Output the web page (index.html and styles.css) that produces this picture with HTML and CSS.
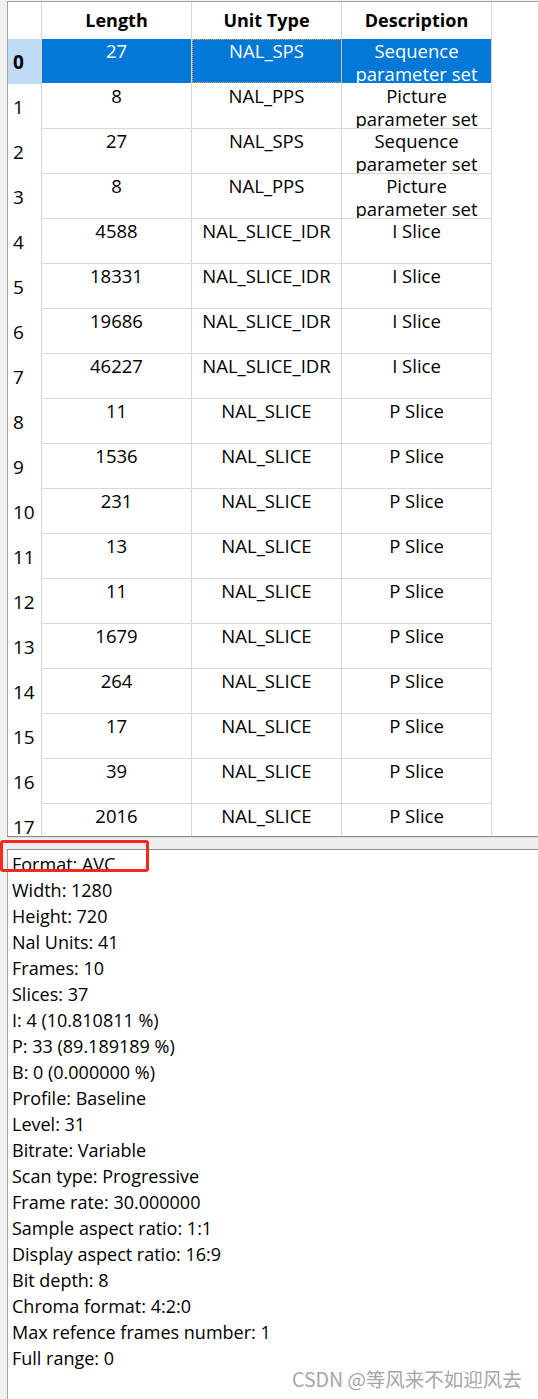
FILE: index.html
```html
<!DOCTYPE html>
<html lang="en">
<head>
    <meta charset="UTF-8">
    <meta name="viewport" content="width=device-width, initial-scale=1.0">
    <title>NAL Units</title>
    <link rel="stylesheet" href="styles.css">
</head>
<body>
    <div class="app">
        <div class="table-view">
            <div class="grid">
                <div class="row head-row">
                    <div class="rh"></div>
                    <div class="cell">Length</div>
                    <div class="cell">Unit Type</div>
                    <div class="cell">Description</div>
                </div>
                <div class="row selected">
                    <div class="rh">0</div>
                    <div class="cell">27</div>
                    <div class="cell focus">NAL_SPS</div>
                    <div class="cell">Sequence parameter set</div>
                </div>
                <div class="row">
                    <div class="rh">1</div>
                    <div class="cell">8</div>
                    <div class="cell">NAL_PPS</div>
                    <div class="cell">Picture parameter set</div>
                </div>
                <div class="row">
                    <div class="rh">2</div>
                    <div class="cell">27</div>
                    <div class="cell">NAL_SPS</div>
                    <div class="cell">Sequence parameter set</div>
                </div>
                <div class="row">
                    <div class="rh">3</div>
                    <div class="cell">8</div>
                    <div class="cell">NAL_PPS</div>
                    <div class="cell">Picture parameter set</div>
                </div>
                <div class="row">
                    <div class="rh">4</div>
                    <div class="cell">4588</div>
                    <div class="cell">NAL_SLICE_IDR</div>
                    <div class="cell">I Slice</div>
                </div>
                <div class="row">
                    <div class="rh">5</div>
                    <div class="cell">18331</div>
                    <div class="cell">NAL_SLICE_IDR</div>
                    <div class="cell">I Slice</div>
                </div>
                <div class="row">
                    <div class="rh">6</div>
                    <div class="cell">19686</div>
                    <div class="cell">NAL_SLICE_IDR</div>
                    <div class="cell">I Slice</div>
                </div>
                <div class="row">
                    <div class="rh">7</div>
                    <div class="cell">46227</div>
                    <div class="cell">NAL_SLICE_IDR</div>
                    <div class="cell">I Slice</div>
                </div>
                <div class="row">
                    <div class="rh">8</div>
                    <div class="cell">11</div>
                    <div class="cell">NAL_SLICE</div>
                    <div class="cell">P Slice</div>
                </div>
                <div class="row">
                    <div class="rh">9</div>
                    <div class="cell">1536</div>
                    <div class="cell">NAL_SLICE</div>
                    <div class="cell">P Slice</div>
                </div>
                <div class="row">
                    <div class="rh">10</div>
                    <div class="cell">231</div>
                    <div class="cell">NAL_SLICE</div>
                    <div class="cell">P Slice</div>
                </div>
                <div class="row">
                    <div class="rh">11</div>
                    <div class="cell">13</div>
                    <div class="cell">NAL_SLICE</div>
                    <div class="cell">P Slice</div>
                </div>
                <div class="row">
                    <div class="rh">12</div>
                    <div class="cell">11</div>
                    <div class="cell">NAL_SLICE</div>
                    <div class="cell">P Slice</div>
                </div>
                <div class="row">
                    <div class="rh">13</div>
                    <div class="cell">1679</div>
                    <div class="cell">NAL_SLICE</div>
                    <div class="cell">P Slice</div>
                </div>
                <div class="row">
                    <div class="rh">14</div>
                    <div class="cell">264</div>
                    <div class="cell">NAL_SLICE</div>
                    <div class="cell">P Slice</div>
                </div>
                <div class="row">
                    <div class="rh">15</div>
                    <div class="cell">17</div>
                    <div class="cell">NAL_SLICE</div>
                    <div class="cell">P Slice</div>
                </div>
                <div class="row">
                    <div class="rh">16</div>
                    <div class="cell">39</div>
                    <div class="cell">NAL_SLICE</div>
                    <div class="cell">P Slice</div>
                </div>
                <div class="row">
                    <div class="rh">17</div>
                    <div class="cell">2016</div>
                    <div class="cell">NAL_SLICE</div>
                    <div class="cell">P Slice</div>
                </div>
            </div>
        </div>

        <div class="splitter"></div>

        <div class="info">
            <p>Format: AVC</p>
            <p>Width: 1280</p>
            <p>Height: 720</p>
            <p>Nal Units: 41</p>
            <p>Frames: 10</p>
            <p>Slices: 37</p>
            <p>I: 4 (10.810811 %)</p>
            <p>P: 33 (89.189189 %)</p>
            <p>B: 0 (0.000000 %)</p>
            <p>Profile: Baseline</p>
            <p>Level: 31</p>
            <p>Bitrate: Variable</p>
            <p>Scan type: Progressive</p>
            <p>Frame rate: 30.000000</p>
            <p>Sample aspect ratio: 1:1</p>
            <p>Display aspect ratio: 16:9</p>
            <p>Bit depth: 8</p>
            <p>Chroma format: 4:2:0</p>
            <p>Max refence frames number: 1</p>
            <p>Full range: 0</p>
        </div>

        <div class="mark-box"></div>
        <div class="watermark">CSDN @等风来不如迎风去</div>
    </div>
</body>
</html>
```

FILE: styles.css
```css
body {
    margin: 0;
    padding: 0;
    background-color: #f0f0f0;
    font-family: "Open Sans", "Noto Sans CJK SC", sans-serif;
    color: #000;
}

.app {
    position: relative;
    width: 538px;
    height: 1399px;
    padding: 1px 0 0 7px;
    box-sizing: border-box;
    display: flex;
    flex-direction: column;
}

.table-view {
    height: 835px;
    box-sizing: border-box;
    border-top: 1px solid #a0a0a0;
    border-left: 1px solid #a0a0a0;
    background-color: #fff;
    overflow: hidden;
}

.row {
    display: flex;
    height: 45px;
}

.rh {
    width: 34px;
    box-sizing: border-box;
    border-right: 1px solid #d8d8d8;
    padding-left: 5px;
    display: flex;
    align-items: center;
    font-size: 19px;
}

.cell {
    width: 150px;
    box-sizing: border-box;
    border-right: 1px solid #d8d8d8;
    border-bottom: 1px solid #d8d8d8;
    text-align: center;
    font-size: 18.5px;
    line-height: 23px;
    padding: 0 4px;
    overflow: hidden;
}

.head-row {
    height: 37px;
}

.head-row .cell {
    border-bottom: none;
    font-weight: bold;
    font-size: 18px;
    line-height: 37px;
}

.selected .rh {
    background-color: #bddcf4;
    font-weight: bold;
}

.selected .cell {
    background-color: #0078d7;
    color: #fff;
    border-bottom: none;
    height: 44px;
}

.focus {
    outline: 1px dotted #f0a050;
    outline-offset: -1px;
}

.splitter {
    height: 14px;
    box-sizing: border-box;
    border-top: 1px solid #8c9096;
    border-bottom: 1px solid #8c9096;
    background-color: #efefef;
    box-shadow: inset 0 1px 0 #dcdcdc;
}

.info {
    flex: 1;
    background-color: #fff;
    border-left: 1px solid #a0a0a0;
    padding: 1px 0 0 4px;
    font-size: 18px;
    line-height: 26px;
}

.info p {
    margin: 0;
}

.mark-box {
    position: absolute;
    left: 0;
    top: 840px;
    width: 149px;
    height: 32px;
    box-sizing: border-box;
    border: 3px solid #f42a1e;
    border-radius: 3px;
}

.watermark {
    position: absolute;
    left: 292px;
    top: 1364px;
    font-family: "Noto Sans CJK SC", sans-serif;
    font-size: 19.5px;
    color: #a6a6a6;
    text-shadow: 0 0 1px #fff;
}
```
